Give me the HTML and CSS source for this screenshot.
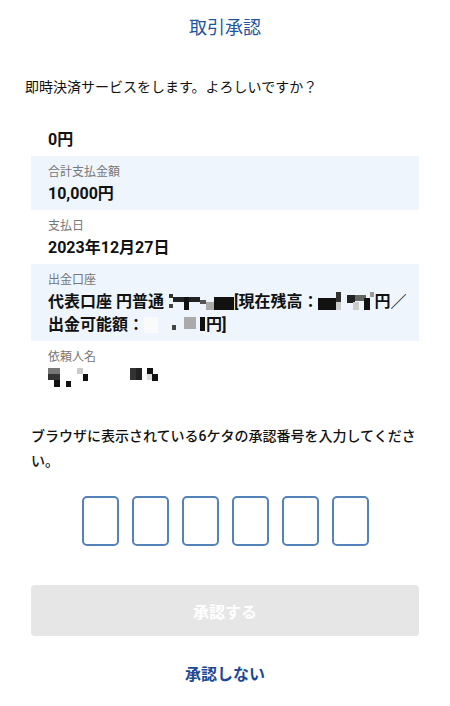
FILE: index.html
```html
<!DOCTYPE html>
<html lang="ja">
<head>
    <meta charset="UTF-8">
    <meta name="viewport" content="width=device-width, initial-scale=1.0">
    <title>取引承認</title>
    <link rel="stylesheet" href="styles.css">
</head>
<body>

    <h1 class="title">取引承認</h1>

    <p class="lead">即時決済サービスをします。よろしいですか？</p>

    <dl class="details">
        <div class="row">
            <dt></dt>
            <dd>0円</dd>
        </div>
        <div class="row shaded">
            <dt>合計支払金額</dt>
            <dd>10,000円</dd>
        </div>
        <div class="row">
            <dt>支払日</dt>
            <dd>2023年12月27日</dd>
        </div>
        <div class="row shaded">
            <dt>出金口座</dt>
            <dd>代表口座 円普通 <svg class="mosaic" width="66" height="18" viewBox="0 0 66 18"><rect x="1" y="2" width="4" height="4" fill="#333"/><rect x="1" y="12" width="4" height="4" fill="#444"/><rect x="5" y="5" width="27" height="5" fill="#222"/><rect x="16" y="5" width="5" height="13" fill="#111"/><rect x="32" y="8" width="6" height="4" fill="#555"/><rect x="38" y="10" width="8" height="8" fill="#aaa"/><rect x="46" y="5" width="20" height="13" fill="#111"/></svg>[現在残高：<svg class="mosaic" width="56" height="18" viewBox="0 0 56 18"><rect x="0" y="6" width="18" height="12" fill="#111"/><rect x="18" y="0" width="5" height="10" fill="#333"/><rect x="18" y="10" width="5" height="8" fill="#ccc"/><rect x="29" y="3" width="8" height="8" fill="#222"/><rect x="37" y="3" width="11" height="6" fill="#666"/><rect x="35" y="10" width="6" height="8" fill="#ccc"/><rect x="46" y="6" width="6" height="12" fill="#111"/><rect x="52" y="0" width="4" height="5" fill="#999"/></svg>円／<br>出金可能額：<svg class="mosaic" width="62" height="18" viewBox="0 0 62 18"><rect x="0" y="2" width="14" height="16" fill="#fafafa"/><rect x="28" y="10" width="4" height="5" fill="#444"/><rect x="40" y="2" width="12" height="12" fill="#aaa"/><rect x="56" y="2" width="5" height="14" fill="#111"/></svg>円]</dd>
        </div>
        <div class="row">
            <dt>依頼人名</dt>
            <dd><svg class="mosaic" width="116" height="19" viewBox="0 0 116 19"><rect x="0" y="0" width="12" height="6" fill="#777"/><rect x="0" y="6" width="12" height="6" fill="#333"/><rect x="6" y="12" width="6" height="7" fill="#111"/><rect x="18" y="13" width="5" height="6" fill="#111"/><rect x="29" y="0" width="6" height="6" fill="#ccc"/><rect x="35" y="6" width="5" height="7" fill="#111"/><rect x="82" y="0" width="12" height="12" fill="#333"/><rect x="88" y="0" width="6" height="12" fill="#222"/><rect x="99" y="0" width="6" height="6" fill="#111"/><rect x="99" y="6" width="6" height="6" fill="#ddd"/><rect x="104" y="6" width="6" height="7" fill="#111"/></svg></dd>
        </div>
    </dl>

    <p class="instruction">ブラウザに表示されている6ケタの承認番号を入力してください。</p>

    <div class="code">
        <input class="digit" type="text" maxlength="1">
        <input class="digit" type="text" maxlength="1">
        <input class="digit" type="text" maxlength="1">
        <input class="digit" type="text" maxlength="1">
        <input class="digit" type="text" maxlength="1">
        <input class="digit" type="text" maxlength="1">
    </div>

    <button class="approve" disabled>承認する</button>

    <a class="reject" href="#">承認しない</a>

</body>
</html>
```

FILE: styles.css
```css
body {
    margin: 0;
    font-family: Roboto, "Noto Sans CJK JP", sans-serif;
    background-color: #fff;
    color: #111;
}

.title {
    margin: 0;
    height: 56px;
    line-height: 56px;
    text-align: center;
    font-size: 18px;
    font-weight: 400;
    color: #1f55a0;
}

.lead {
    margin: 21px 0 5px;
    padding-left: 25px;
    font-size: 14px;
    line-height: 20px;
}

.details {
    margin: 0 31px;
}

.row {
    padding: 6px 2px 5px 17px;
}

.row.shaded {
    background-color: #eef5fd;
}

.row dt {
    height: 20px;
    font-size: 12px;
    line-height: 20px;
    color: #777;
}

.row dd {
    margin: 0;
    font-size: 16px;
    font-weight: 700;
    line-height: 23px;
}

.mosaic {
    vertical-align: -3px;
}

.instruction {
    margin: 29px 0 0;
    padding: 0 29px 0 31px;
    font-size: 14px;
    font-weight: 500;
    line-height: 25px;
}

.code {
    display: flex;
    justify-content: center;
    gap: 13px;
    margin-top: 22px;
}

.digit {
    box-sizing: border-box;
    width: 37px;
    height: 50px;
    margin: 0;
    padding: 0;
    border: 2px solid #5582b8;
    border-radius: 5px;
    text-align: center;
    font-size: 20px;
}

.approve {
    display: block;
    box-sizing: border-box;
    width: 388px;
    height: 51px;
    margin: 39px 31px 0;
    border: none;
    border-radius: 4px;
    background-color: #e6e6e6;
    color: #fff;
    font-family: inherit;
    font-size: 16px;
    font-weight: 700;
}

.reject {
    display: block;
    margin-top: 27px;
    text-align: center;
    font-size: 16px;
    font-weight: 700;
    line-height: 24px;
    color: #1a4a95;
    text-decoration: none;
}
```
